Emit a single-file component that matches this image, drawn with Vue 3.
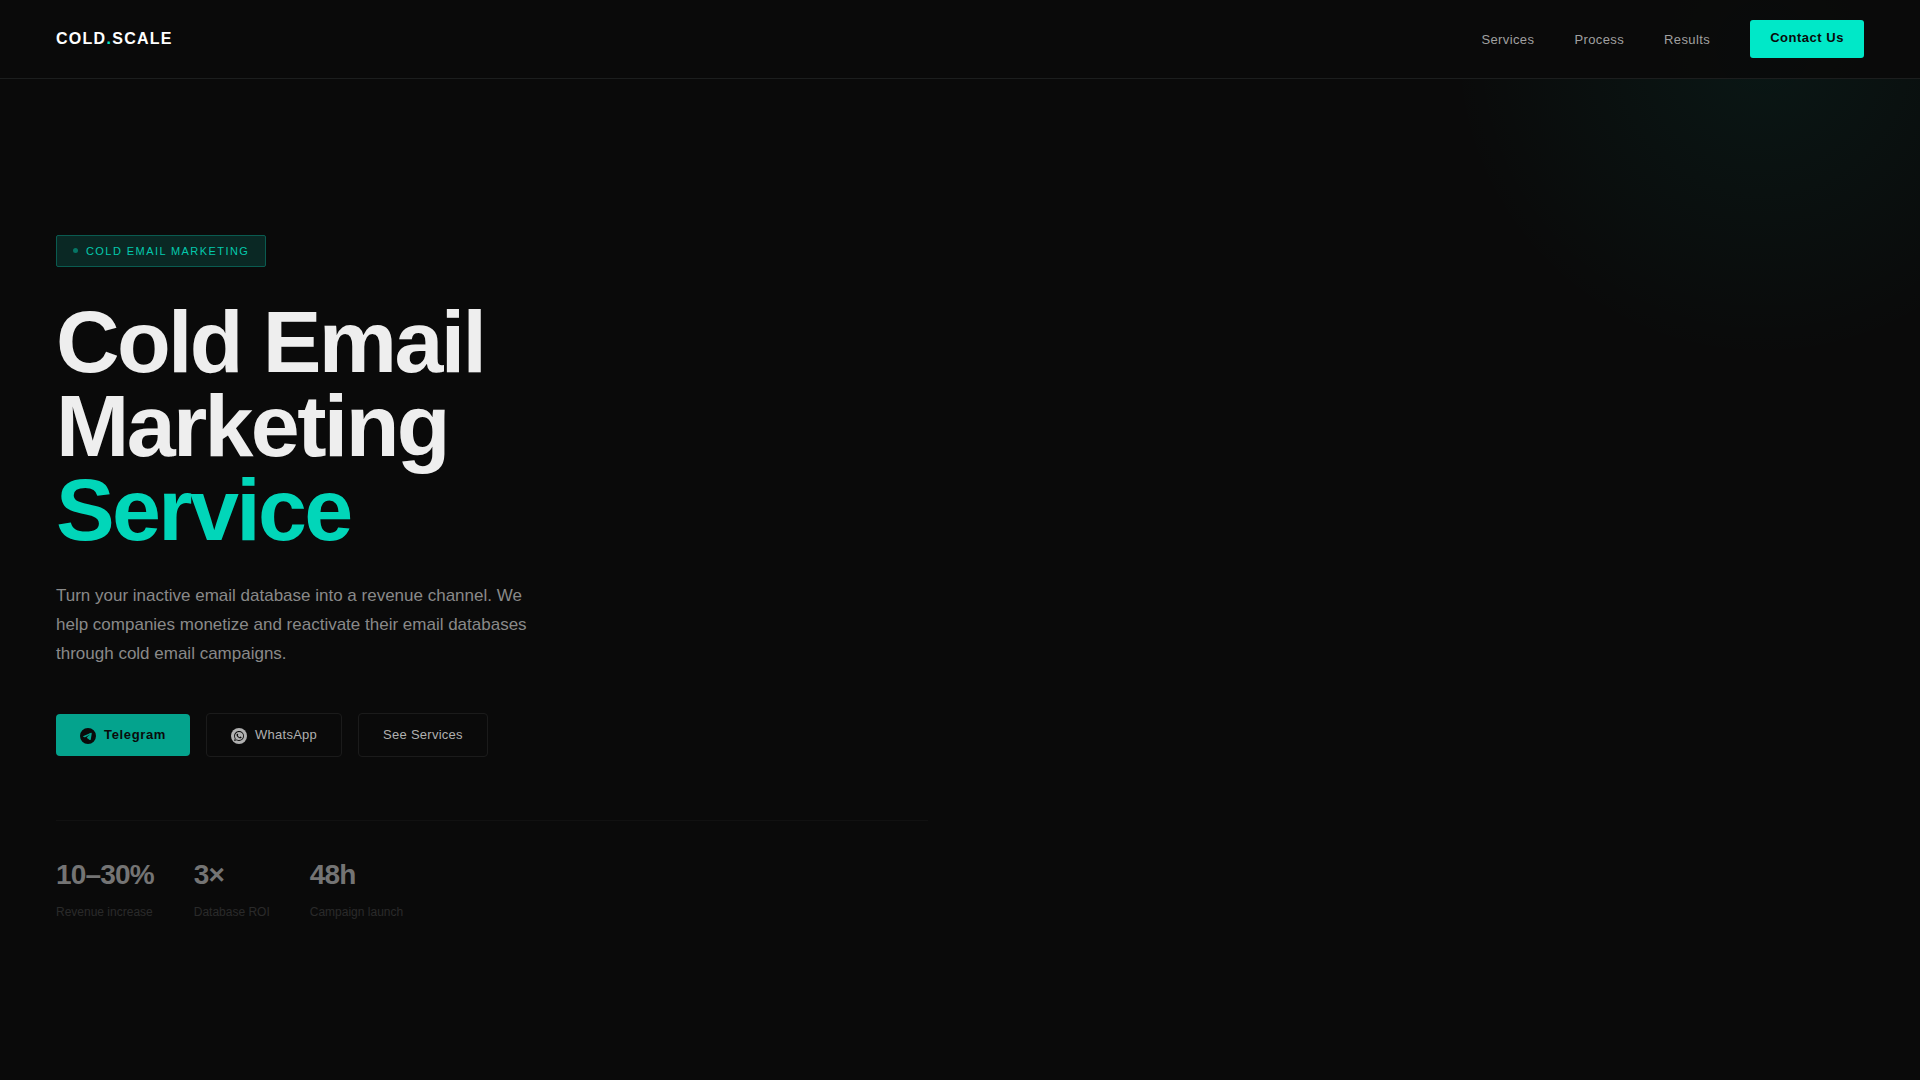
<script setup>
const navLinks = ['Services', 'Process', 'Results']
const stats = [
  { value: '10–30%', label: 'Revenue increase' },
  { value: '3×', label: 'Database ROI' },
  { value: '48h', label: 'Campaign launch' },
]
</script>

<template>
  <div class="page">
    <header class="header">
      <a class="logo" href="#">COLD<span class="accent">.</span>SCALE</a>
      <nav class="nav">
        <a v-for="link in navLinks" :key="link" class="nav-link" :href="'#' + link.toLowerCase()">{{ link }}</a>
        <button class="contact" type="button">Contact Us</button>
      </nav>
    </header>

    <main class="hero">
      <div class="hero-content">
        <p class="badge"><span class="dot"></span>COLD EMAIL MARKETING</p>
        <h1 class="title">Cold Email<br />Marketing<br /><span class="title-accent">Service</span></h1>
        <p class="lead">
          Turn your inactive email database into a revenue channel. We help companies monetize and
          reactivate their email databases through cold email campaigns.
        </p>
        <div class="actions">
          <a class="btn btn-primary" href="#telegram">
            <svg class="icon" viewBox="0 0 24 24" aria-hidden="true">
              <path
                fill="currentColor"
                d="M11.944 0A12 12 0 0 0 0 12a12 12 0 0 0 12 12 12 12 0 0 0 12-12A12 12 0 0 0 12 0a12 12 0 0 0-.056 0zm4.962 7.224c.1-.002.321.023.465.14a.506.506 0 0 1 .171.325c.016.093.036.306.02.472-.18 1.898-.962 6.502-1.36 8.627-.168.9-.499 1.201-.82 1.23-.696.065-1.225-.46-1.9-.902-1.056-.693-1.653-1.124-2.678-1.8-1.185-.78-.417-1.21.258-1.91.177-.184 3.247-2.977 3.307-3.23.007-.032.014-.15-.056-.212s-.174-.041-.249-.024c-.106.024-1.793 1.14-5.061 3.345-.48.33-.913.49-1.302.48-.428-.008-1.252-.241-1.865-.44-.752-.245-1.349-.374-1.297-.789.027-.216.325-.437.893-.663 3.498-1.524 5.83-2.529 6.998-3.014 3.332-1.386 4.025-1.627 4.476-1.635z"
              />
            </svg>
            Telegram
          </a>
          <a class="btn btn-outline" href="#whatsapp">
            <svg class="icon" viewBox="0 0 24 24" aria-hidden="true">
              <circle cx="12" cy="12" r="12" fill="currentColor" />
              <path
                class="icon-cut"
                transform="translate(4.6 4.6) scale(0.62)"
                d="M17.472 14.382c-.297-.149-1.758-.867-2.03-.967-.273-.099-.471-.148-.67.15-.197.297-.767.966-.94 1.164-.173.199-.347.223-.644.075-.297-.15-1.255-.463-2.39-1.475-.883-.788-1.48-1.761-1.653-2.059-.173-.297-.018-.458.13-.606.134-.133.298-.347.446-.52.149-.174.198-.298.298-.497.099-.198.05-.371-.025-.52-.075-.149-.669-1.612-.916-2.207-.242-.579-.487-.5-.669-.51-.173-.008-.371-.01-.57-.01-.198 0-.52.074-.792.372-.272.297-1.04 1.016-1.04 2.479 0 1.462 1.065 2.875 1.213 3.074.149.198 2.096 3.2 5.077 4.487.709.306 1.262.489 1.694.625.712.227 1.36.195 1.871.118.571-.085 1.758-.719 2.006-1.413.248-.694.248-1.289.173-1.413-.074-.124-.272-.198-.57-.347m-5.421 7.403h-.004a9.87 9.87 0 0 1-5.031-1.378l-.361-.214-3.741.982.998-3.648-.235-.374a9.86 9.86 0 0 1-1.51-5.26c.001-5.45 4.436-9.884 9.888-9.884 2.64 0 5.122 1.03 6.988 2.898a9.825 9.825 0 0 1 2.893 6.994c-.003 5.45-4.437 9.884-9.885 9.884m8.413-18.297A11.815 11.815 0 0 0 12.05 0C5.495 0 .16 5.335.157 11.892c0 2.096.547 4.142 1.588 5.945L.057 24l6.305-1.654a11.882 11.882 0 0 0 5.683 1.448h.005c6.554 0 11.89-5.335 11.893-11.893a11.821 11.821 0 0 0-3.48-8.413z"
              />
            </svg>
            WhatsApp
          </a>
          <a class="btn btn-outline" href="#services">See Services</a>
        </div>
        <dl class="stats">
          <div v-for="stat in stats" :key="stat.label" class="stat">
            <dt class="stat-label">{{ stat.label }}</dt>
            <dd class="stat-value">{{ stat.value }}</dd>
          </div>
        </dl>
      </div>
    </main>
  </div>
</template>

<style>
body {
  margin: 0;
  background: #0a0a0a;
}
</style>

<style scoped>
.page {
  display: flex;
  flex-direction: column;
  min-height: 100vh;
  background: radial-gradient(
    circle 314px at calc(100% - 157px) 47px,
    rgba(0, 232, 200, 0.06),
    rgba(0, 232, 200, 0)
  );
  color: #fff;
  font-family: 'Liberation Sans', Arial, sans-serif;
}

a {
  color: inherit;
  text-decoration: none;
}

.header {
  display: flex;
  align-items: center;
  justify-content: space-between;
  padding: 20px 56px;
  border-bottom: 1px solid #1c1e1e;
  background: rgba(10, 10, 10, 0.9);
}

.logo {
  font-size: 16px;
  font-weight: 700;
  letter-spacing: 0.08em;
}

.accent {
  color: #00e8c8;
}

.nav {
  display: flex;
  align-items: center;
  gap: 40px;
}

.nav-link {
  color: #a0a0a0;
  font-size: 13px;
  letter-spacing: 0.03em;
}

.contact {
  padding: 11px 20px 13px;
  border: 0;
  border-radius: 3px;
  background: #00e8c8;
  color: #0a0a0a;
  font: inherit;
  font-size: 13px;
  font-weight: 700;
  line-height: 14px;
  letter-spacing: 0.04em;
}

.hero {
  display: grid;
  flex: 1;
  grid-template-columns: 1fr 1fr;
  align-items: center;
  gap: 64px;
  padding: 0 56px 3px;
}

.badge {
  display: inline-flex;
  align-items: center;
  gap: 8px;
  margin: 0;
  padding: 8px 16px;
  border: 1px solid #0a5b50;
  border-radius: 2px;
  background: #0a2824;
  color: #04c8ad;
  font-size: 11px;
  line-height: 14px;
  letter-spacing: 0.13em;
}

.dot {
  width: 5px;
  height: 5px;
  border-radius: 50%;
  background: #067565;
}

.title {
  margin: 33px 0 29px;
  color: #eee;
  font-size: 88px;
  font-weight: 700;
  line-height: 84px;
  letter-spacing: -0.03em;
}

.title-accent {
  color: #01d6b9;
}

.lead {
  max-width: 480px;
  margin: 0 0 45px;
  color: #898989;
  font-size: 17px;
  line-height: 29px;
}

.actions {
  display: flex;
  align-items: center;
  gap: 16px;
}

.btn {
  display: inline-flex;
  align-items: center;
  gap: 8px;
  padding: 12px 24px;
  border-radius: 4px;
  font-size: 13px;
  line-height: 18px;
}

.btn-primary {
  background: #04a38d;
  color: #0a0a0a;
  font-weight: 700;
  letter-spacing: 0.05em;
}

.btn-outline {
  border: 1px solid #1b1b1b;
  color: #b0b0b0;
  letter-spacing: 0.02em;
}

.icon {
  width: 16px;
  height: 16px;
  margin-top: 2px;
}

.icon-cut {
  fill: #0a0a0a;
}

.stats {
  display: flex;
  gap: 40px;
  margin: 63px 0 0;
  padding-top: 37px;
  border-top: 1px solid #111;
}

.stat {
  display: flex;
  flex-direction: column-reverse;
  gap: 10px;
}

.stat-value {
  margin: 0;
  color: #747474;
  font-size: 28px;
  font-weight: 700;
  line-height: 34px;
  letter-spacing: -0.03em;
}

.stat-label {
  color: #2a2a2a;
  font-size: 12px;
  line-height: 20px;
}
</style>
